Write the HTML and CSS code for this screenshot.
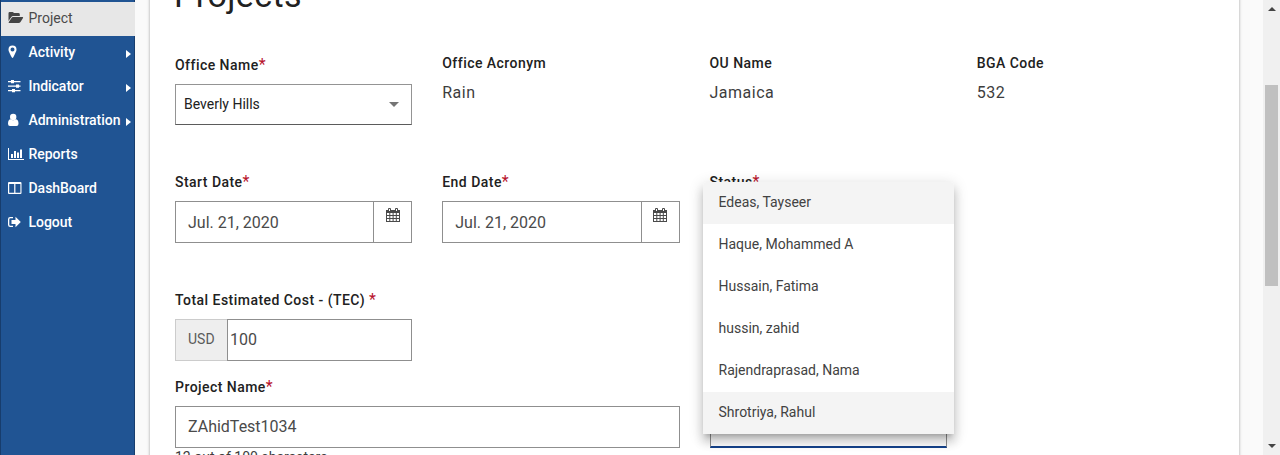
FILE: index.html
```html
<!DOCTYPE html>
<html lang="en">
<head>
<meta charset="utf-8">
<title>Projects</title>
<link rel="stylesheet" href="styles.css">
</head>
<body>
<div class="app">
  <nav class="sidebar">
    <a class="nav-item active"><svg class="icon" viewBox="0 0 16 14"><path d="M.5 10V2.200Q.5 1 1.700 1H4.500Q5.700 1 5.700 2h4.600Q11.800 2 11.800 3.200V5H5Q4 5 3.300 6Z"/><path d="M5 6h9.500q1 0 .5.900L12.500 11q-.6 1-2 1H1.200q-1 0-.4-.9L3.500 7Q4 6 5 6z"/></svg><span>Project</span></a>
    <a class="nav-item"><svg class="icon" viewBox="0 0 16 14"><path fill-rule="evenodd" d="M4.500 0.500A4 4 0 0 1 8.500 4.500C8.500 6 8 6.700 5.300 12.300Q4.500 13.600 3.700 12.300C1 6.700.5 6 .5 4.500A4 4 0 0 1 4.500.5zm0 2a2 2 0 1 0 0 4 2 2 0 0 0 0-4z"/></svg><span>Activity</span><i class="caret"></i></a>
    <a class="nav-item"><svg class="icon" viewBox="0 0 16 14"><path d="M0 2h12.500v1.200H0zM0 6.500h12.500v1.200H0zM0 11h12.500v1.200H0z"/><path d="M3 1h3v3.200H3zM8 5.500h3v3.200H8zM4 10h3v3.200H4z"/></svg><span>Indicator</span><i class="caret"></i></a>
    <a class="nav-item"><svg class="icon" viewBox="0 0 16 14"><circle cx="5.200" cy="4" r="3.200"/><path d="M2.700 6.300Q5 8.300 7.700 6.300 10.500 6.500 10.500 10.700 10.500 13 8.500 13H2Q0 13 0 10.700 0 6.500 2.700 6.300z"/></svg><span>Administration</span><i class="caret"></i></a>
    <a class="nav-item"><svg class="icon" viewBox="0 0 16 14"><path d="M0 1h1v11h15v1H0zM3 7h2v4H3zM6 4h2v7H6zM9 5.500h2V11H9zM12 2.500h2V11h-2z"/></svg><span>Reports</span></a>
    <a class="nav-item"><svg class="icon" viewBox="0 0 16 14"><path fill-rule="evenodd" d="M1 1h11.500q1 0 1 1v10q0 1-1 1H1q-1 0-1-1V2Q0 1 1 1zm.2 2v8.800h5V3zm6.200 0v8.800h5V3z"/></svg><span>DashBoard</span></a>
    <a class="nav-item"><svg class="icon" viewBox="0 0 16 14"><path d="M5 2v1.200H2.300Q1.300 3.200 1.300 4.200v5.600q0 1 1 1H5V12H2.200Q0 12 0 9.800V4.200Q0 2 2.200 2z"/><path d="M3.500 5h4V1.700L12.800 7l-5.300 5.300V9h-4z"/></svg><span>Logout</span></a>
  </nav>
  <main class="page">
    <section class="card">
      <h1 class="title">Projects</h1>
      <div class="row row-office">
        <div class="field">
          <label class="label">Office Name<b class="req">*</b></label>
          <div class="select"><span>Beverly Hills</span><i class="arrow"></i></div>
        </div>
        <div class="info"><span class="label">Office Acronym</span><span class="value">Rain</span></div>
        <div class="info"><span class="label">OU Name</span><span class="value">Jamaica</span></div>
        <div class="info"><span class="label">BGA Code</span><span class="value">532</span></div>
      </div>
      <div class="row row-dates">
        <div class="field">
          <label class="label">Start Date<b class="req">*</b></label>
          <div class="input"><span class="text">Jul. 21, 2020</span><span class="picker"><svg class="cal" viewBox="0 0 14 14"><path fill-rule="evenodd" d="M0 2h2V1q0-1 1-1h1q1 0 1 1v1h4V1q0-1 1-1h1q1 0 1 1v1h2v12H0zM1 5v2h2.300V5zm3.300 0v2h2.300V5zm3.300 0v2h2.200V5zm3.200 0v2H13V5zM1 8v2h2.300V8zm3.300 0v2h2.300V8zm3.300 0v2h2.200V8zm3.200 0v2H13V8zM1 11v2h2.300v-2zm3.300 0v2h2.300v-2zm3.300 0v2h2.200v-2zm3.200 0v2H13v-2zM3 1v2h1V1zm7 0v2h1V1z"/></svg></span></div>
        </div>
        <div class="field">
          <label class="label">End Date<b class="req">*</b></label>
          <div class="input"><span class="text">Jul. 21, 2020</span><span class="picker"><svg class="cal" viewBox="0 0 14 14"><path fill-rule="evenodd" d="M0 2h2V1q0-1 1-1h1q1 0 1 1v1h4V1q0-1 1-1h1q1 0 1 1v1h2v12H0zM1 5v2h2.300V5zm3.300 0v2h2.300V5zm3.300 0v2h2.200V5zm3.200 0v2H13V5zM1 8v2h2.300V8zm3.300 0v2h2.300V8zm3.300 0v2h2.200V8zm3.200 0v2H13V8zM1 11v2h2.300v-2zm3.300 0v2h2.300v-2zm3.300 0v2h2.200v-2zm3.200 0v2H13v-2zM3 1v2h1V1zm7 0v2h1V1z"/></svg></span></div>
        </div>
        <div class="field">
          <label class="label">Status<b class="req">*</b></label>
          <div class="menu">
            <div class="option shaded">Edeas, Tayseer</div>
            <div class="option">Haque, Mohammed A</div>
            <div class="option">Hussain, Fatima</div>
            <div class="option">hussin, zahid</div>
            <div class="option">Rajendraprasad, Nama</div>
            <div class="option shaded">Shrotriya, Rahul</div>
          </div>
        </div>
      </div>
      <div class="row row-cost">
        <div class="field">
          <label class="label">Total Estimated Cost - (TEC) <b class="req">*</b></label>
          <div class="cost"><span class="unit">USD</span><span class="amount">100</span></div>
        </div>
      </div>
      <div class="row row-name">
        <div class="field wide">
          <label class="label">Project Name<b class="req">*</b></label>
          <div class="input"><span class="text">ZAhidTest1034</span></div>
          <div class="hint">12 out of 100 characters</div>
        </div>
        <div class="focused"></div>
      </div>
    </section>
  </main>
  <div class="scrollbar"><i class="up"></i><div class="thumb"></div><i class="down"></i></div>
</div>
</body>
</html>
```
FILE: styles.css
```css
* { box-sizing: border-box; }
body { margin: 0; background: #fafafa; font-family: Roboto, "Liberation Sans", sans-serif; color: #3d3d3d; overflow: hidden; }
.app { display: flex; height: 455px; overflow: hidden; }

.sidebar { width: 135px; flex: none; background: #205493; border-left: 1px solid #173d6d; border-right: 1px solid #173d6d; padding-top: 2px; }
.nav-item { display: flex; align-items: center; height: 34px; padding: 0 3px 2px 7px; color: #fff; font-size: 14px; font-weight: 500; letter-spacing: -.03px; }
.nav-item.active { background: #e7e7e7; color: #4a4a4a; margin-right: -1px; font-weight: 400; letter-spacing: 0; }
.icon { width: 16px; height: 14px; margin-right: 4.500px; fill: currentColor; flex: none; }
.nav-item.active .icon { fill: #444; }
.caret { margin: 4px 0 0 auto; border-left: 5px solid #fff; border-top: 4px solid transparent; border-bottom: 4px solid transparent; }

.page { flex: 1; padding: 0 24px 0 15px; }
.card { margin-top: -25px; height: 520px; background: #fff; padding: 0 25px; box-shadow: 0 0 3px rgba(0, 0, 0, .35); }
.title { margin: 0; height: 80px; line-height: 40px; font-size: 34px; font-weight: 400; letter-spacing: .4px; color: #212121; text-indent: -1px; }
.row { display: grid; grid-template-columns: repeat(4, 1fr); column-gap: 30px; }
.row-office { height: 117px; }
.row-dates { height: 118px; }
.row-cost { height: 87px; }
.field { min-width: 0; position: relative; }
.wide { grid-column: span 2; }
.label { display: block; height: 20px; line-height: 20px; font-size: 14px; font-weight: 500; letter-spacing: .46px; color: #212121; white-space: nowrap; }
.req { color: #b8142c; font-size: 16px; font-weight: 400; line-height: 16px; }
.info .label { margin-top: -2px; }
.value { display: block; margin-top: 10px; line-height: 20px; font-size: 16px; letter-spacing: .5px; }
.select { margin-top: 9px; height: 41px; border: 1px solid #949494; border-bottom-color: #5b5b5b; display: flex; align-items: center; justify-content: space-between; padding: 0 12px 0 8px; font-size: 14px; line-height: 18px; color: #212121; }
.select span { padding-bottom: 2px; }
.arrow { border-top: 5px solid #757575; border-left: 5px solid transparent; border-right: 5px solid transparent; }
.input { margin-top: 9px; height: 42px; border: 1px solid #8f8f8f; display: flex; font-size: 16px; color: #4a4a4a; }
.text { flex: 1; padding-left: 12px; line-height: 41px; }
.picker { width: 38px; border-left: 1px solid #8f8f8f; padding: 6px 0 0 11.500px; }
.cal { display: block; width: 14px; height: 14px; fill: #4a4a4a; }
.cost { margin-top: 9px; height: 42px; display: flex; color: #4a4a4a; }
.unit { width: 52px; border: 1px solid #ccc; border-right: 0; background: #eee; font-size: 14px; line-height: 39px; padding-left: 12px; color: #5b5b5b; }
.amount { flex: 1; border: 1px solid #8f8f8f; padding-left: 2px; font-size: 16px; line-height: 39px; }
.row-name .text { line-height: 39px; }
.hint { font-size: 14px; line-height: 18px; }
.focused { margin-top: 29px; height: 42px; border: 1px solid #8f8f8f; border-bottom: 2px solid #14428b; }
.menu { position: absolute; z-index: 2; top: 10px; left: -7px; width: 251px; background: #fff; border-radius: 4px 4px 0 0; overflow: hidden; box-shadow: 0 5px 5px -3px rgba(0, 0, 0, .2), 0 8px 10px 1px rgba(0, 0, 0, .14), 0 3px 14px 2px rgba(0, 0, 0, .12); }
.option { height: 42px; line-height: 41px; padding-left: 16px; font-size: 14px; color: #424242; }
.shaded { background: #f4f4f4; }

.scrollbar { width: 17px; flex: none; background: #f0f0f0; display: flex; flex-direction: column; align-items: center; padding: 7px 0; }
.up { border-bottom: 4px solid #444; border-left: 4px solid transparent; border-right: 4px solid transparent; }
.thumb { width: 13px; height: 201px; margin-top: 74px; background: #c0c0c0; }
.down { margin-top: auto; border-top: 4px solid #444; border-left: 4px solid transparent; border-right: 4px solid transparent; }
```
